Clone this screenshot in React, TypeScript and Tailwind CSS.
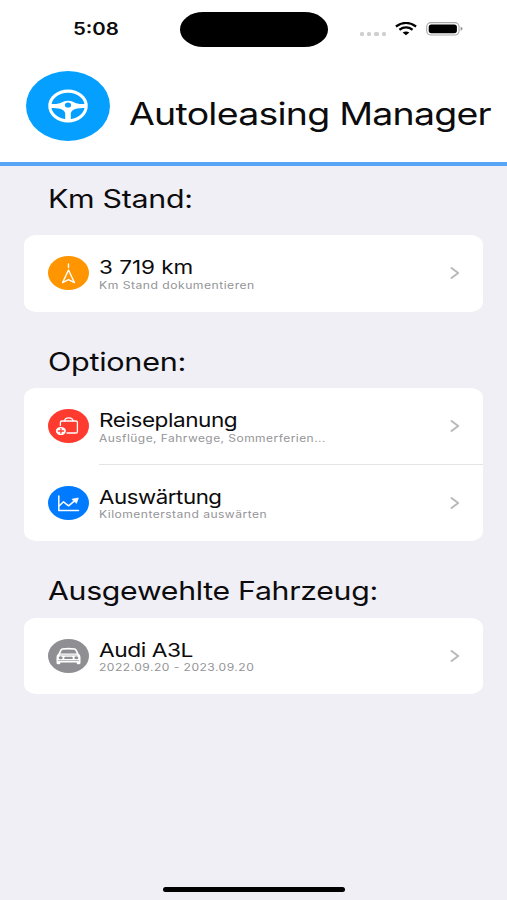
import type { ReactNode } from 'react';
import clsx from 'clsx';

const WheelIcon = () => (
    <svg viewBox="0 0 40 34" className="h-[34px] w-[40px]" fill="none" stroke="#fff">
        <ellipse cx="20" cy="17" rx="18.2" ry="14.900" strokeWidth="3.100" />
        <path d="M2.500 15C9 15.400 11.500 14.400 14.500 12.900Q20 10.400 25.500 12.900C28.500 14.400 31 15.400 37.500 15V18.900C29 18.900 23.500 19.800 22.800 24.500V32H17.200V24.500C16.500 19.800 11 18.900 2.500 18.900Z" fill="#fff" stroke="none" />
        <ellipse cx="20" cy="16" rx="3.100" ry="2.600" fill="#05a0ff" stroke="none" />
    </svg>
);

const LocationIcon = () => (
    <svg viewBox="0 0 41 34" className="h-full w-full" fill="none" stroke="#fff" strokeWidth="1.4" strokeLinejoin="round" strokeLinecap="round">
        <path d="M20.500 8V11.500" />
        <path d="M20.500 14L26.400 26.600L20.500 23.600L14.600 26.600Z" />
    </svg>
);

const SuitcaseIcon = () => (
    <svg viewBox="0 0 41 34" className="h-full w-full" fill="none" stroke="#fff" strokeWidth="1.3" strokeLinejoin="round" strokeLinecap="round">
        <path d="M12.400 16.500V13.200Q12.400 12 13.800 12H28Q29.400 12 29.400 13.200V22.800Q29.400 24 28 24H19" />
        <path d="M16.600 12C16.600 9.600 18 8.800 20.800 8.800S25 9.600 25 12" />
        <ellipse cx="12.900" cy="22" rx="5" ry="4.100" fill="#fff" stroke="none" />
        <path d="M12.900 19.700V24.300M10.200 22H15.600" stroke="#ff3b30" />
    </svg>
);

const ChartIcon = () => (
    <svg viewBox="0 0 41 34" className="h-full w-full" fill="none" stroke="#fff" strokeWidth="1.500" strokeLinejoin="round" strokeLinecap="round">
        <path d="M10.800 10V24.400H30.500" />
        <path d="M11.300 19.800L15.500 15.800L20.600 19.800L27.400 14.200" />
        <path d="M24.300 13.200L30.300 12L28.500 17Z" fill="#fff" strokeWidth="0.800" />
    </svg>
);

const CarIcon = () => (
    <svg viewBox="0 0 41 34" className="h-full w-full">
        <path fillRule="evenodd" fill="#fff" d="M14.200 9.200Q20.500 8.400 26.800 9.200Q28 9.400 28.600 10.600L30.700 14.800Q32.500 16 32.500 18V23.700Q32.500 25.200 31 25.200H30Q28.600 25.200 28.600 23.700V23.400H12.400V23.700Q12.400 25.200 11 25.200H10Q8.500 25.200 8.500 23.700V18Q8.500 16 10.300 14.800L12.400 10.600Q13 9.400 14.200 9.200ZM14.800 10.700Q14.100 10.800 13.700 11.600L12.300 14.600H28.700L27.300 11.600Q26.900 10.800 26.200 10.700Q20.500 10.200 14.800 10.700Z" />
        <g fill="#8e8e93">
            <ellipse cx="12.700" cy="18.800" rx="2" ry="1.500" />
            <ellipse cx="28.300" cy="18.800" rx="2" ry="1.500" />
            <rect x="16.200" y="17.700" width="8.600" height="2.400" rx="1.200" />
            <rect x="9.800" y="21.400" width="21.400" height="0.600" />
            <rect x="11.500" y="15.800" width="18" height="0.500" />
        </g>
    </svg>
);

const Chevron = () => (
    <svg viewBox="0 0 10 14" className="mt-px -mr-px ml-auto h-[14px] w-[10px]" fill="none" stroke="#b9b9bc" strokeWidth="2" strokeLinejoin="round" strokeLinecap="round">
        <path d="M1.500 2L8.200 7L1.500 12" />
    </svg>
);

const StatusBar = () => (
    <div className="flex h-[59px] items-start">
        <div className="w-[180px] pt-[19px] pl-[73px]">
            <span className="block w-max origin-left scale-x-[1.2] text-[17px] leading-5 font-semibold">5:08</span>
        </div>
        <div className="mt-3 h-[35px] w-[148px] rounded-[24px/18px] bg-black" />
        <div className="mt-[32px] ml-8 flex gap-[3px]">
            {[0, 1, 2, 3].map((dot) => (
                <span key={dot} className="h-[3.500px] w-[4.200px] rounded-[1.500px] bg-[#cfcfcf]" />
            ))}
        </div>
        <svg viewBox="0 0 22 14" className="mt-[22px] ml-[9px] h-[14px] w-[22px]" fill="none" stroke="#000" strokeWidth="2.300">
            <path d="M0.900 4.500Q11 -2.600 21.100 4.500" />
            <path d="M4.400 7.700Q11 3.200 17.600 7.700" />
            <path d="M7.600 10.500Q11 8.400 14.400 10.500L11 13.200Z" fill="#000" stroke="none" />
        </svg>
        <svg viewBox="0 0 38 14" className="mt-[22px] ml-[9px] h-[14px] w-[38px]">
            <rect x="0.700" y="0.600" width="32.400" height="12.400" rx="4.200" fill="none" stroke="#a8a8a8" strokeWidth="1.100" />
            <rect x="2.700" y="2.400" width="28.200" height="8.800" rx="2.600" />
            <path d="M34.600 4.800Q36.600 5.300 36.600 6.800T34.600 8.800Z" fill="#999" />
        </svg>
    </div>
);

const Heading = ({ className, children }: { className: string; children: string }) => (
    <h2 className={clsx('ml-6 w-max origin-left text-[25.5px] leading-8 tracking-[-0.01em]', className)}>{children}</h2>
);

const Card = ({ children }: { children: ReactNode }) => (
    <div className="overflow-hidden rounded-[12px/10px] bg-white">{children}</div>
);

interface RowProps {
    icon: ReactNode;
    color: string;
    title: string;
    titleScale: string;
    subtitle: string;
    subtitleScale: string;
    divider?: boolean;
}

const Row = ({ icon, color, title, titleScale, subtitle, subtitleScale, divider }: RowProps) => (
    <div className="flex h-[76.5px] pl-6">
        <div className={clsx('mt-[21px] h-[34px] w-[41px] shrink-0 rounded-[50%]', color)}>{icon}</div>
        <div className={clsx('ml-2.5 flex flex-1 items-center border-b pr-6', divider ? 'border-[#e4e4e6]' : 'border-transparent')}>
            <div className="h-full pt-[22px]">
                <div className={clsx('w-max origin-left text-[19.3px] leading-5', titleScale)}>{title}</div>
                <div className={clsx('-mt-[0.5px] w-max origin-left text-[10.3px] leading-4 tracking-[0.04em] text-[#949497]', subtitleScale)}>{subtitle}</div>
            </div>
            <Chevron />
        </div>
    </div>
);

const App = () => {
    return (
        <div className="flex h-[900px] w-[507px] flex-col overflow-hidden bg-[#f0eff5] font-['Inter',sans-serif] text-[#0c0c0e]">
            <header className="h-[166px] border-b-4 border-[#58a5f5] bg-white">
                <StatusBar />
                <div className="flex pt-3 pl-[26px]">
                    <div className="flex h-[70px] w-[84px] items-center justify-center rounded-[50%] bg-[#05a0ff]">
                        <WheelIcon />
                    </div>
                    <h1 className="mt-[23px] ml-[19px] w-max origin-left scale-x-[1.197] text-[31.3px] leading-10 tracking-[-0.02em] whitespace-nowrap">Autoleasing Manager</h1>
                </div>
            </header>
            <main className="flex-1 px-6 pt-[17px]">
                <Heading className="mb-5 scale-x-[1.19]">Km Stand:</Heading>
                <Card>
                    <Row
                        icon={<LocationIcon />}
                        color="bg-[#ff9500]"
                        title="3 719 km"
                        titleScale="scale-x-[1.165]"
                        subtitle="Km Stand dokumentieren"
                        subtitleScale="scale-x-[1.18]"
                    />
                </Card>
                <Heading className="mt-[34px] mb-[10.5px] scale-x-[1.2]">Optionen:</Heading>
                <Card>
                    <Row
                        icon={<SuitcaseIcon />}
                        color="bg-[#ff3b30]"
                        title="Reiseplanung"
                        titleScale="scale-x-[1.17] tracking-[-0.02em]"
                        subtitle="Ausflüge, Fahrwege, Sommerferien..."
                        subtitleScale="scale-x-[1.16]"
                        divider
                    />
                    <Row
                        icon={<ChartIcon />}
                        color="bg-[#007aff]"
                        title="Auswärtung"
                        titleScale="scale-x-[1.155] tracking-[-0.02em]"
                        subtitle="Kilomenterstand auswärten"
                        subtitleScale="scale-x-[1.17]"
                    />
                </Card>
                <Heading className="mt-[34px] mb-[10.5px] scale-x-[1.187]">Ausgewehlte Fahrzeug:</Heading>
                <Card>
                    <Row
                        icon={<CarIcon />}
                        color="bg-[#8e8e93]"
                        title="Audi A3L"
                        titleScale="scale-x-[1.18] tracking-[-0.02em]"
                        subtitle="2022.09.20 - 2023.09.20"
                        subtitleScale="scale-x-[1.17]"
                    />
                </Card>
            </main>
            <div className="mb-2 ml-[163px] h-[5px] w-[182px] rounded-full bg-black" />
        </div>
    );
};

export default App;
